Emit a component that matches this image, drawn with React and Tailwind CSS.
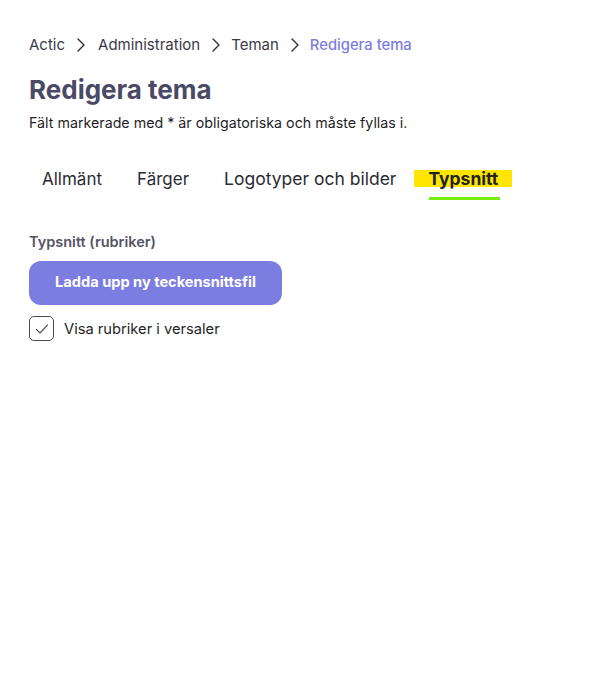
import React from "react";

function Chevron() {
  return (
    <svg width="10" height="16" viewBox="0 0 10 16" fill="none" className="mx-[11px]">
      <path d="M2 2l6 6-6 6" stroke="#2f2f3a" strokeWidth="1.4" strokeLinecap="round" strokeLinejoin="round" />
    </svg>
  );
}

export default function App() {
  return (
    <div className="min-h-[695px] w-[615px] bg-white px-[29px] pt-[34px] text-[#2b2b36]" style={{ fontFamily: "Inter, 'Noto Sans', sans-serif" }}>
      <nav className="flex items-center text-[15px] leading-[22px] text-[#3a3a48]">
        <span>Actic</span>
        <Chevron />
        <span className="ml-[1px]">Administration</span>
        <Chevron />
        <span className="-ml-[1px]">Teman</span>
        <Chevron />
        <span className="-ml-[1px] text-[14.8px] font-medium text-[#7b7ee0]">Redigera tema</span>
      </nav>
      <h1 className="mt-[18px] text-[26px] font-bold leading-[32px] text-[#4b4a66]">Redigera tema</h1>
      <p className="mt-[7px] text-[14.25px] leading-[20px] text-[#1f1f28]">Fält markerade med * är obligatoriska och måste fyllas i.</p>
      <div className="mt-[34px] flex items-start text-[17px] leading-[24px] text-[#2b2b36]">
        <div className="px-[13px] pb-[13px]">Allmänt</div>
        <div className="ml-[9px] px-[13px] pb-[13px]">Färger</div>
        <div className="ml-[9px] px-[13px] pb-[13px] text-[17.5px]">Logotyper och bilder</div>
        <div className="ml-[5px] flex flex-col items-center">
          <span className="mt-[3px] bg-[#ffe600] px-[14px] text-[17.5px] font-bold leading-[17px] text-[#222]">Typsnitt</span>
          <span className="ml-[2px] mt-[10px] h-[3px] w-[71px] bg-[#76ee10]"></span>
        </div>
      </div>
      <div className="mt-[28px] text-[14.5px] font-semibold leading-[20px] text-[#555566]">Typsnitt (rubriker)</div>
      <button className="mt-[9px] flex h-[44px] w-[253px] items-center justify-center rounded-[12px] bg-[#7b7ee0] text-[14.6px] font-bold text-white">
        Ladda upp ny teckensnittsfil
      </button>
      <label className="mt-[11px] flex items-center gap-[10px]">
        <span className="flex h-[25px] w-[25px] items-center justify-center rounded-[5px] border border-[#4a4a58]">
          <svg width="14" height="14" viewBox="0 0 14 14" fill="none">
            <path d="M1.5 7.5l3.5 3.5 7.5-8" stroke="#555" strokeWidth="1.1" strokeLinecap="round" strokeLinejoin="round" />
          </svg>
        </span>
        <span className="text-[14.7px] leading-[22px] text-[#1f1f28]">Visa rubriker i versaler</span>
      </label>
    </div>
  );
}
